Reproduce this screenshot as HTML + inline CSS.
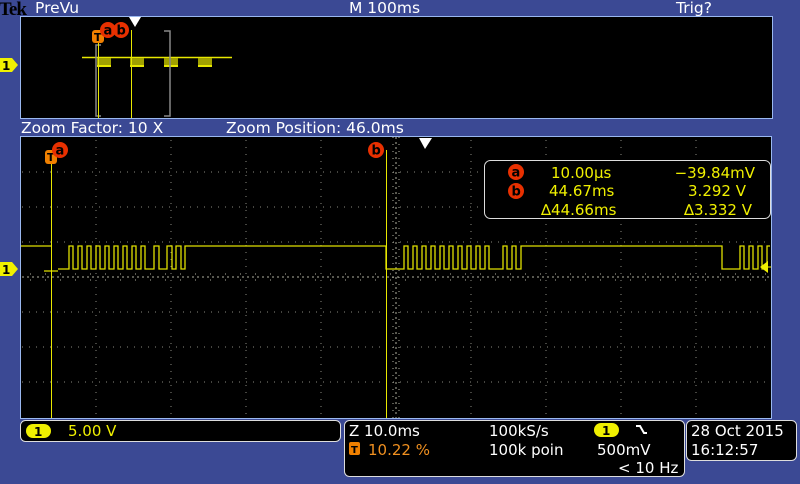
<!DOCTYPE html><html><head><style>
body{margin:0;width:800px;height:480px;background:#3b4994;overflow:hidden;font-family:"DejaVu Sans","Liberation Sans",sans-serif}
</style></head><body>
<svg width="800" height="480" xmlns="http://www.w3.org/2000/svg" font-family="DejaVu Sans, Liberation Sans, sans-serif">
<rect width="800" height="480" fill="#3b4994"/>
<text x="-1" y="15" font-family="Liberation Serif, serif" font-weight="bold" font-size="19" fill="#000" letter-spacing="-1">Tek</text>
<text x="35" y="13" font-size="15.5" fill="#fff">PreVu</text>
<text x="349" y="13" font-size="15.5" fill="#fff">M 100ms</text>
<text x="676" y="13" font-size="15.5" fill="#fff">Trig?</text>
<rect x="20.5" y="16.5" width="752" height="102" fill="#000" stroke="#9ab8f0"/>
<line x1="82" y1="57.5" x2="232" y2="57.5" stroke="#e8e800" stroke-width="1.5"/>
<g fill="#a0a000"><rect x="97" y="58" width="14" height="8"/><rect x="130" y="58" width="14" height="8"/><rect x="164" y="58" width="14" height="8"/><rect x="198" y="58" width="14" height="8"/></g>
<g fill="#e8e800"><rect x="97" y="65" width="14" height="2"/><rect x="130" y="65" width="14" height="2"/><rect x="164" y="65" width="14" height="2"/><rect x="198" y="65" width="14" height="2"/></g>
<path d="M101,45H96V116H101M164,31H170V116H164" fill="none" stroke="#888" stroke-width="1.5"/>
<line x1="131.5" y1="30" x2="131.5" y2="118" stroke="#e8e800"/>
<line x1="98.5" y1="40" x2="98.5" y2="118" stroke="#e8e800"/>
<path d="M129,17H141L135,27Z" fill="#fff"/>
<rect x="92" y="30" width="12" height="13" rx="3" fill="#f08000"/><text x="94" y="41" font-size="11" font-weight="bold" fill="#000">T</text>
<circle cx="108" cy="30" r="8" fill="#e83000"/><text x="103.5" y="34.5" font-size="13" font-weight="bold" fill="#000">a</text>
<circle cx="121" cy="30" r="8" fill="#e83000"/><text x="116.5" y="34.5" font-size="13" font-weight="bold" fill="#000">b</text>
<path d="M0,58H12L18,65L12,72H0Z" fill="#f0f000"/><text x="2" y="70" font-size="12" font-weight="bold" fill="#000">1</text>
<text x="21" y="133" font-size="15.5" fill="#fff">Zoom Factor: 10 X</text>
<text x="226" y="133" font-size="15.5" fill="#fff">Zoom Position: 46.0ms</text>
<rect x="20.5" y="136.5" width="751" height="282" fill="#000" stroke="#9ab8f0"/>
<g stroke="#8a8a80" stroke-width="1" stroke-dasharray="1 6">
<path d="M96,140V418M171,140V418M246,140V418M321,140V418M471,140V418M546,140V418M621,140V418M696,140V418"/>
<path d="M22,172H770M22,207H770M22,242H770M22,312H770M22,347H770M22,382H770"/>
</g>
<g stroke="#b0b0a0" stroke-dasharray="2 3"><path d="M396,137V418M22,277H770"/></g>
<g stroke="#b0b0a0" stroke-dasharray="1 14" stroke-dashoffset="-8"><path d="M22,274H770M22,280H770" /></g>
<g stroke="#b0b0a0" stroke-dasharray="1 6"><path d="M393,137V418M399,137V418"/></g>
<g fill="none" stroke="#e0e000" stroke-width="1.3">
<path d="M21,246H51M44,271H58M58,269H69V246H73V269H78V246H82V269H87V246H91V269H96V246H100V269H105V246H109V269H114V246H118V269H123V246H127V269H132V246H136V269H141V246H145V269H154V246H159V269H167V246H172V269H176V246H181V269H185V246H386V269H404V246H408V269H413V246H417V269H422V246H426V269H431V246H435V269H440V246H444V269H449V246H453V269H458V246H462V269H467V246H471V269H476V246H480V269H485V246H489V269H503V246H507V269H512V246H516V269H521V246H722V269H740V246H744V269H749V246H753V269H758V246H762V269H767V246H770"/>
</g>
<line x1="51.5" y1="150" x2="51.5" y2="418" stroke="#e8e800"/>
<line x1="386.5" y1="150" x2="386.5" y2="418" stroke="#e8e800"/>
<path d="M419,138H432L425,149Z" fill="#fff"/>
<path d="M760,267L768,261V273Z" fill="#f0f000"/><line x1="765" y1="267" x2="771" y2="267" stroke="#f0f000"/>
<rect x="45" y="150" width="12" height="14" rx="3" fill="#f08000"/><text x="47" y="161" font-size="11" font-weight="bold" fill="#000">T</text>
<circle cx="60" cy="150" r="8" fill="#e83000"/><text x="55.5" y="154.5" font-size="13" font-weight="bold" fill="#000">a</text>
<circle cx="376" cy="150" r="8" fill="#e83000"/><text x="371.5" y="154.5" font-size="13" font-weight="bold" fill="#000">b</text>
<path d="M0,262H12L18,269L12,276H0Z" fill="#f0f000"/><text x="2" y="274" font-size="12" font-weight="bold" fill="#000">1</text>
<rect x="484.5" y="160.5" width="286" height="58" rx="6" fill="#000" stroke="#ddd"/>
<circle cx="516" cy="172" r="8" fill="#e83000"/><text x="511.5" y="176.5" font-size="13" font-weight="bold" fill="#000">a</text>
<circle cx="516" cy="191" r="8" fill="#e83000"/><text x="511.5" y="195.5" font-size="13" font-weight="bold" fill="#000">b</text>
<g font-size="15" fill="#f0f000">
<text x="551" y="178">10.00µs</text><text x="755" y="178" text-anchor="end">−39.84mV</text>
<text x="549" y="196">44.67ms</text><text x="746" y="196" text-anchor="end">3.292 V</text>
<text x="541" y="215">∆44.66ms</text><text x="752" y="215" text-anchor="end">∆3.332 V</text>
</g>
<rect x="20.5" y="420.5" width="320" height="21" rx="5" fill="#000" stroke="#ddd"/>
<rect x="26" y="424" width="25" height="14" rx="7" fill="#f0f000"/><text x="34" y="436" font-size="12" font-weight="bold" fill="#000">1</text>
<text x="68" y="436" font-size="15" fill="#f0f000">5.00 V</text>
<rect x="344.5" y="420.5" width="340" height="56" rx="5" fill="#000" stroke="#ddd"/>
<text x="349" y="436" font-size="15" fill="#fff">Z 10.0ms</text>
<rect x="349" y="442" width="11" height="13" rx="2" fill="#f08000"/><text x="351" y="453" font-size="10" font-weight="bold" fill="#000">T</text>
<text x="368" y="455" font-size="15" fill="#f09020">10.22 %</text>
<text x="489" y="436" font-size="15" fill="#fff">100kS/s</text>
<text x="489" y="455" font-size="15" fill="#fff">100k poin</text>
<rect x="594" y="423" width="25" height="14" rx="7" fill="#f0f000"/><text x="602" y="435" font-size="12" font-weight="bold" fill="#000">1</text>
<path d="M636,426H640L644,433H647" fill="none" stroke="#fff" stroke-width="2"/>
<text x="597" y="455" font-size="15" fill="#fff">500mV</text>
<text x="618" y="473" font-size="15" fill="#fff">&lt; 10 Hz</text>
<rect x="686.5" y="420.5" width="110" height="40" rx="5" fill="#000" stroke="#ddd"/>
<text x="691" y="436" font-size="15" fill="#fff">28 Oct  2015</text>
<text x="691" y="455" font-size="15" fill="#fff">16:12:57</text>
</svg>
</body></html>
